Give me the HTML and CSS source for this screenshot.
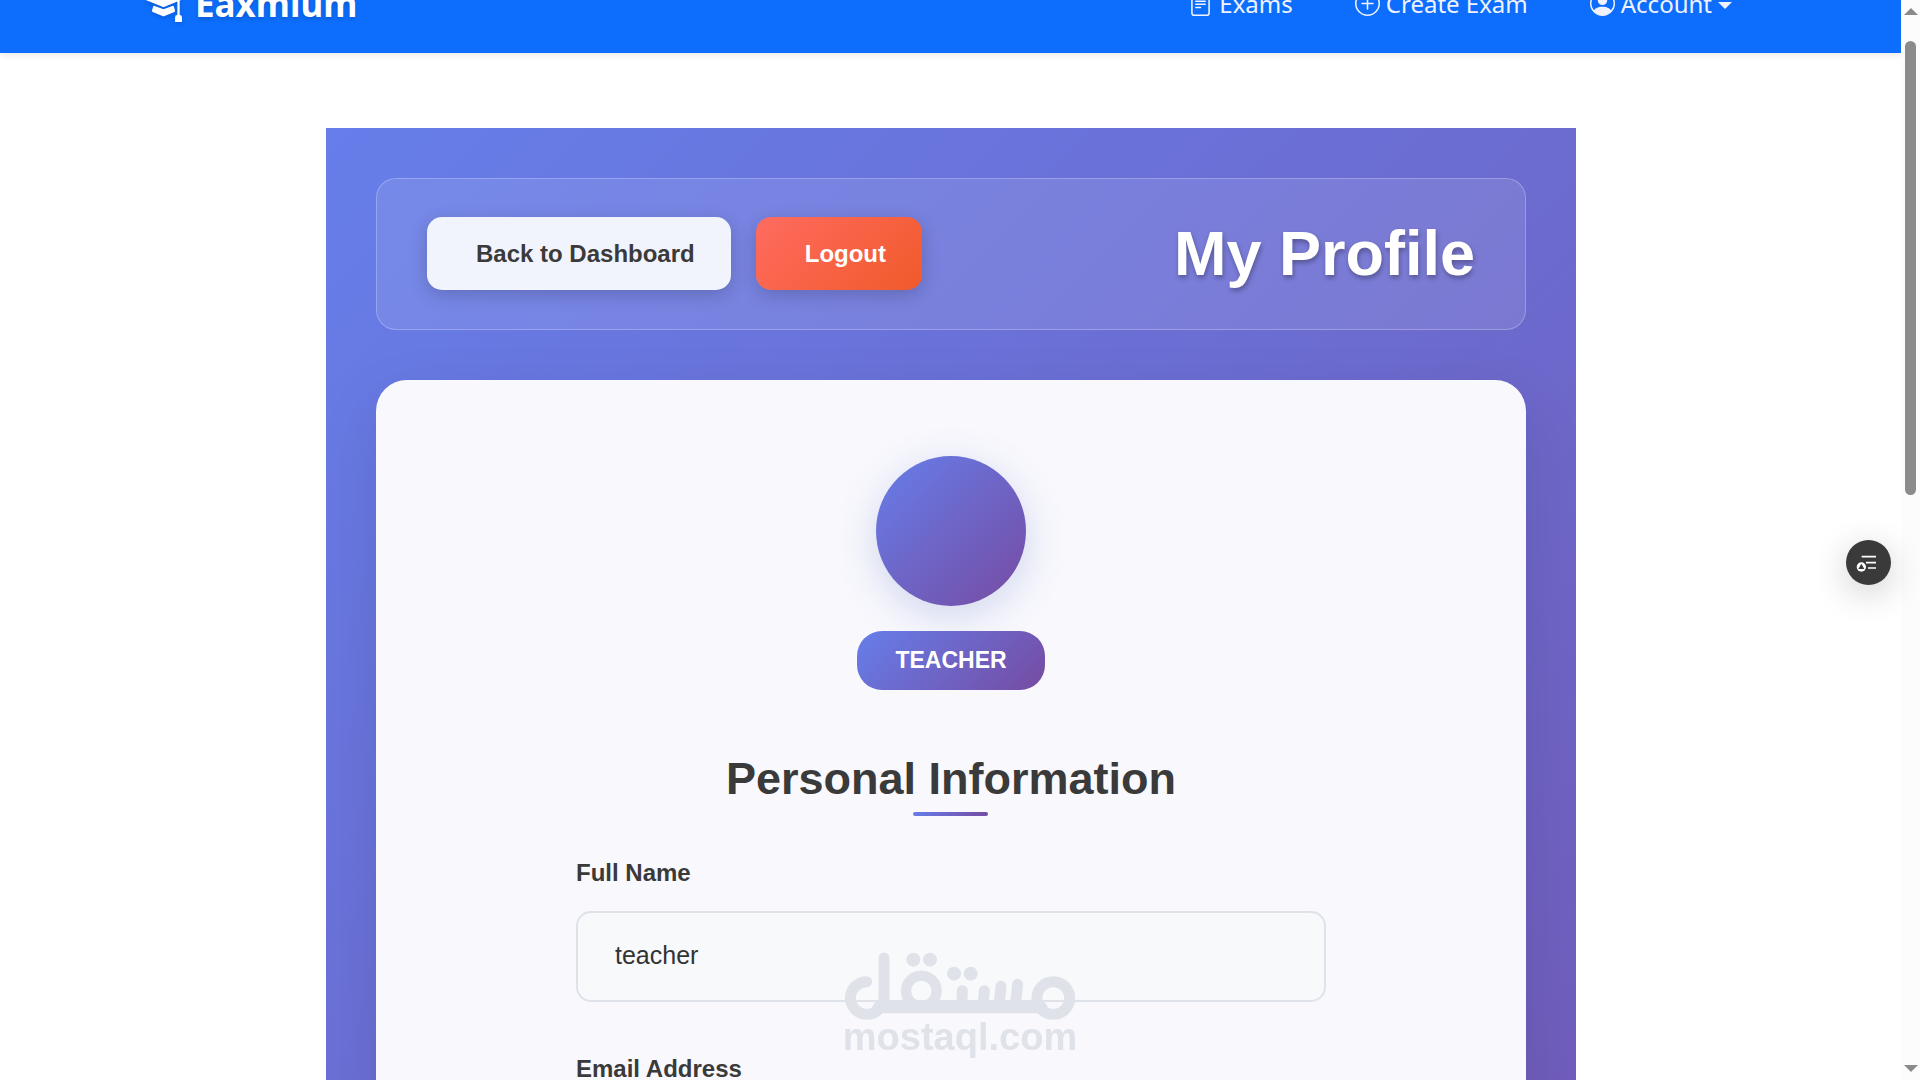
FILE: index.html
```html
<!DOCTYPE html>
<html lang="en">
<head>
    <meta charset="UTF-8">
    <meta name="viewport" content="width=device-width, initial-scale=1.0">
    <title>My Profile - Eaxmium</title>
    <link rel="stylesheet" href="styles.css">
</head>
<body>
    <div class="page">
        <nav class="navbar">
            <div class="nav-container">
                <a class="brand" href="#">
                    <svg class="brand-icon" viewBox="0 0 16 16" fill="currentColor" aria-hidden="true">
                        <path d="M8.211 2.047a.5.5 0 0 0-.422 0l-7.5 3.5a.5.5 0 0 0 .025.917l7.5 3a.5.5 0 0 0 .372 0L14 7.14V13a1 1 0 0 0-1 1v2h3v-2a1 1 0 0 0-1-1V6.739l.686-.275a.5.5 0 0 0 .025-.917z"/>
                        <path d="M4.176 9.032a.5.5 0 0 0-.656.327l-.5 1.7a.5.5 0 0 0 .294.605l4.5 1.8a.5.5 0 0 0 .372 0l4.5-1.8a.5.5 0 0 0 .294-.605l-.5-1.7a.5.5 0 0 0-.656-.327L8 10.466z"/>
                    </svg>
                    <span>Eaxmium</span>
                </a>
                <div class="nav-links">
                    <a class="nav-link" href="#">
                        <svg viewBox="0 0 16 16" fill="currentColor" aria-hidden="true">
                            <path d="M5 4a.5.5 0 0 0 0 1h6a.5.5 0 0 0 0-1zm-.5 2.5A.5.5 0 0 1 5 6h6a.5.5 0 0 1 0 1H5a.5.5 0 0 1-.5-.5M5 8a.5.5 0 0 0 0 1h6a.5.5 0 0 0 0-1zm0 2a.5.5 0 0 0 0 1h3a.5.5 0 0 0 0-1z"/>
                            <path d="M2 2a2 2 0 0 1 2-2h8a2 2 0 0 1 2 2v12a2 2 0 0 1-2 2H4a2 2 0 0 1-2-2zm10-1H4a1 1 0 0 0-1 1v12a1 1 0 0 0 1 1h8a1 1 0 0 0 1-1V2a1 1 0 0 0-1-1"/>
                        </svg>
                        Exams
                    </a>
                    <a class="nav-link" href="#">
                        <svg viewBox="0 0 16 16" fill="currentColor" aria-hidden="true">
                            <path d="M8 15A7 7 0 1 1 8 1a7 7 0 0 1 0 14m0 1A8 8 0 1 0 8 0a8 8 0 0 0 0 16"/>
                            <path d="M8 4a.5.5 0 0 1 .5.5v3h3a.5.5 0 0 1 0 1h-3v3a.5.5 0 0 1-1 0v-3h-3a.5.5 0 0 1 0-1h3v-3A.5.5 0 0 1 8 4"/>
                        </svg>
                        Create Exam
                    </a>
                    <a class="nav-link dropdown-toggle" href="#">
                        <svg viewBox="0 0 16 16" fill="currentColor" aria-hidden="true">
                            <path d="M11 6a3 3 0 1 1-6 0 3 3 0 0 1 6 0"/>
                            <path fill-rule="evenodd" d="M0 8a8 8 0 1 1 16 0A8 8 0 0 1 0 8m8-7a7 7 0 0 0-5.468 11.37C3.242 11.226 4.805 10 8 10s4.757 1.225 5.468 2.37A7 7 0 0 0 8 1"/>
                        </svg>
                        Account
                    </a>
                </div>
            </div>
        </nav>

        <main class="profile-container">
            <header class="profile-header">
                <div class="header-actions">
                    <button type="button" class="btn btn-back">Back to Dashboard</button>
                    <button type="button" class="btn btn-logout">Logout</button>
                </div>
                <h1>My Profile</h1>
            </header>

            <section class="profile-card">
                <div class="avatar"></div>
                <div class="role-badge">TEACHER</div>
                <h2>Personal Information</h2>
                <form class="profile-form">
                    <div class="form-group">
                        <label for="full-name">Full Name</label>
                        <input type="text" id="full-name" name="full-name" value="teacher">
                    </div>
                    <div class="form-group">
                        <label for="email">Email Address</label>
                        <input type="email" id="email" name="email">
                    </div>
                </form>
            </section>
        </main>
    </div>

    <div class="scrollbar" aria-hidden="true">
        <div class="arrow-up"></div>
        <div class="track">
            <div class="thumb"></div>
        </div>
        <div class="arrow-down"></div>
    </div>

    <button type="button" class="float-btn" aria-label="Reading list">
        <svg viewBox="78 210 135 135" aria-hidden="true">
            <path d="M125 260h43M138 278h30M144 294h24" fill="none" stroke="#fff" stroke-width="5"/>
            <circle cx="124" cy="291" r="14" fill="#fff"/>
            <path d="M124 281l9 16h-18z" fill="#3a3a3a"/>
        </svg>
    </button>

    <div class="watermark">
        <svg viewBox="75 65 690 206" fill="none" stroke="currentColor" stroke-width="33" stroke-linecap="round" aria-hidden="true">
            <path d="M140 154A49 49 0 1 0 183 227Q192 218 192 205V83"/>
            <path d="M175 231H665" stroke-width="35"/>
            <circle cx="304" cy="182" r="46" stroke-width="31"/>
            <circle cx="700" cy="203" r="49"/>
            <path d="M427 181L425 225M493 181L489 225M543 168L537 225M593 162L586 225"/>
            <g fill="currentColor" stroke="none">
                <circle cx="280" cy="88" r="21"/>
                <circle cx="330" cy="88" r="21"/>
                <circle cx="402" cy="130" r="21"/>
                <circle cx="452" cy="130" r="21"/>
            </g>
        </svg>
        <span>mostaql.com</span>
    </div>
</body>
</html>
```

FILE: styles.css
```css
* {
    box-sizing: border-box;
}
body {
    margin: 0;
    font-family: "Liberation Sans", Arial, sans-serif;
    background-color: #fff;
    color: #3a3a3a;
}
.page {
    height: 100vh;
    padding-right: 18px;
    overflow: hidden;
}

/* Navbar, partly scrolled out of view */
.navbar {
    height: 99px;
    margin-top: -46px;
    background-color: #0d6efd;
    box-shadow: 0 3px 6px rgba(0, 0, 0, 0.08);
    font-family: "Noto Sans", sans-serif;
}
.nav-container {
    display: flex;
    align-items: center;
    justify-content: space-between;
    max-width: 1650px;
    height: 100%;
    margin: 0 auto;
    padding: 0 13px 0 19px;
}
.brand {
    display: flex;
    align-items: center;
    gap: 13px;
    color: #fff;
    font-size: 35px;
    font-weight: 700;
    text-decoration: none;
    text-shadow: 0 2px 4px rgba(0, 0, 0, 0.2);
}
.brand-icon {
    width: 37px;
    height: 37px;
    filter: drop-shadow(0 2px 2px rgba(0, 0, 0, 0.15));
}
.nav-links {
    display: flex;
}
.nav-link {
    display: flex;
    align-items: center;
    gap: 6px;
    padding: 0 31px;
    color: #f0f3fd;
    font-size: 24px;
    text-decoration: none;
}
.nav-link svg {
    width: 25px;
    height: 25px;
}
.dropdown-toggle::after {
    content: "";
    margin-top: 4px;
    border-top: 7px solid;
    border-left: 7px solid transparent;
    border-right: 7px solid transparent;
}

/* Profile */
.profile-container {
    max-width: 1250px;
    min-height: 200vh;
    margin: 75px auto 0;
    padding: 50px;
    background: linear-gradient(135deg, #667eea 0%, #764ba2 100%);
}
.profile-header {
    display: flex;
    align-items: center;
    justify-content: space-between;
    margin-bottom: 50px;
    padding: 38px 50px 39px;
    border: 1px solid rgba(255, 255, 255, 0.25);
    border-radius: 20px;
    background: rgba(255, 255, 255, 0.1);
}
.header-actions {
    display: flex;
    gap: 25px;
}
.btn {
    height: 73px;
    padding: 0 36px 0 49px;
    border: none;
    border-radius: 15px;
    font-family: inherit;
    font-size: 24px;
    font-weight: bold;
    cursor: pointer;
    box-shadow: 0 5px 18px rgba(0, 0, 0, 0.18);
}
.btn-back {
    background: #f2f4fd;
    color: #3a3a3a;
}
.btn-logout {
    background: linear-gradient(135deg, #ff6b60 0%, #f05a2a 100%);
    color: #fff;
}
h1 {
    margin: 0;
    color: #fff;
    font-size: 63px;
    line-height: 73px;
    text-shadow: 1px 3px 5px rgba(0, 0, 0, 0.3);
}
.profile-card {
    display: flex;
    flex-direction: column;
    align-items: center;
    min-height: 160vh;
    padding: 76px 50px;
    border-radius: 31px;
    background: #f8f8fd;
    box-shadow: 0 20px 60px rgba(0, 0, 0, 0.1);
}
.avatar {
    width: 150px;
    height: 150px;
    margin-bottom: 25px;
    border-radius: 50%;
    background: linear-gradient(135deg, #667eea 0%, #764ba2 100%);
    box-shadow: 0 10px 38px rgba(90, 115, 190, 0.25);
}
.role-badge {
    padding: 0 38px;
    border-radius: 25px;
    background: linear-gradient(135deg, #667eea 0%, #764ba2 100%);
    color: #fff;
    font-size: 23px;
    font-weight: bold;
    line-height: 59px;
}
h2 {
    position: relative;
    margin: 62px 0 52px;
    font-size: 45px;
    line-height: 54px;
}
h2::after {
    content: "";
    position: absolute;
    bottom: -10px;
    left: 50%;
    width: 75px;
    height: 4px;
    margin-left: -38px;
    border-radius: 2px;
    background: linear-gradient(135deg, #667eea 0%, #764ba2 100%);
}
.profile-form {
    width: 100%;
    max-width: 750px;
}
.form-group {
    margin-bottom: 52px;
}
label {
    display: block;
    margin-bottom: 24px;
    font-size: 24px;
    font-weight: bold;
    line-height: 29px;
}
input {
    display: block;
    width: 100%;
    height: 91px;
    padding: 0 37px 2px;
    border: 2px solid #e0e2ea;
    border-radius: 15px;
    background: #f8f9fb;
    color: #333;
    font-family: inherit;
    font-size: 25px;
}

/* Scrollbar */
.scrollbar {
    position: fixed;
    top: 0;
    right: 0;
    bottom: 0;
    display: flex;
    flex-direction: column;
    align-items: center;
    width: 19px;
    padding: 8px 0;
    background: #fcfcfc;
}
.arrow-up,
.arrow-down {
    border-left: 7px solid transparent;
    border-right: 7px solid transparent;
}
.arrow-up {
    border-bottom: 7px solid #8b8b8b;
}
.arrow-down {
    border-top: 7px solid #8b8b8b;
}
.track {
    flex: 1;
    padding: 26px 0;
}
.thumb {
    width: 11px;
    height: 42vh;
    border-radius: 6px;
    background: #8b8b8b;
}

.float-btn {
    position: fixed;
    top: 50%;
    right: 29px;
    width: 45px;
    height: 45px;
    padding: 0;
    border: none;
    border-radius: 50%;
    background: #3a3a3a;
    cursor: pointer;
    box-shadow: 0 8px 35px rgba(0, 0, 0, 0.2);
}
.float-btn svg {
    display: block;
}

.watermark {
    position: fixed;
    right: 0;
    bottom: 26px;
    left: 0;
    display: flex;
    flex-direction: column;
    align-items: center;
    color: #e0e2ea;
    font-size: 38px;
    font-weight: bold;
    line-height: 33px;
    pointer-events: none;
}
.watermark svg {
    width: 230px;
}
```
